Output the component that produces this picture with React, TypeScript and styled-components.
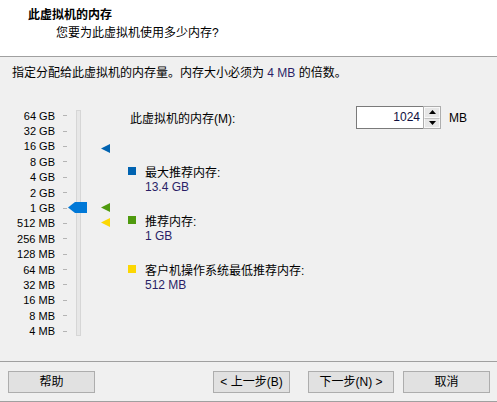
import React from "react";
import styled, { createGlobalStyle } from "styled-components";

const Global = createGlobalStyle`
  html, body { margin: 0; padding: 0; background: #f0f0f0; }
  body { font-family: "Liberation Sans", "Noto Sans CJK SC", sans-serif; font-size: 12px; color: #000; }
  * { box-sizing: border-box; }
`;

const Window = styled.div`
  width: 497px;
  height: 402px;
  display: flex;
  flex-direction: column;
  background: #f0f0f0;
  overflow: hidden;
`;

const Header = styled.div`
  height: 57px;
  background: #fff;
  border-bottom: 1px solid #a0a0a0;
  padding-top: 7px;
  display: flex;
  flex-direction: column;
`;

const Title = styled.div`
  font-weight: bold;
  line-height: 16px;
  padding-left: 28px;
`;

const Subtitle = styled.div`
  line-height: 16px;
  margin-top: 2px;
  padding-left: 56px;
`;

const Body = styled.div`
  height: 304px;
  display: flex;
  flex-direction: column;
  padding-top: 8px;
`;

const Instruction = styled.div`
  line-height: 16px;
  padding-left: 12px;
`;

const Num = styled.span`
  color: #2a1f66;
`;

const Main = styled.div`
  display: flex;
  margin-top: 24px;
`;

const SliderArea = styled.div`
  position: relative;
  width: 128px;
  height: 232px;
  flex-shrink: 0;
`;

const Scale = styled.div`
  padding-top: 3px;
  display: grid;
  grid-template-rows: repeat(15, 15.4px);
`;

const ScaleRow = styled.div`
  display: flex;
  align-items: center;
`;

const ScaleLabel = styled.span`
  width: 55px;
  text-align: right;
  font-size: 11px;
  white-space: nowrap;
`;

const Tick = styled.span`
  width: 4px;
  height: 1px;
  background: #b4b4b4;
  margin-left: 8px;
`;

const Track = styled.div`
  position: absolute;
  left: 76px;
  top: 5px;
  width: 5px;
  height: 226px;
  background: #e7e7e7;
  border: 1px solid #d6d6d6;
`;

const Thumb = styled.div`
  position: absolute;
  left: 68px;
  top: 97px;
  width: 19px;
  height: 11px;
  background: #0078d7;
  clip-path: polygon(0 50%, 7px 0, 100% 0, 100% 100%, 7px 100%);
`;

const Marker = styled.div<{ $color: string; $top: number }>`
  position: absolute;
  left: 101px;
  top: ${(p) => p.$top}px;
  width: 9px;
  height: 9px;
  background: ${(p) => p.$color};
  clip-path: polygon(0 50%, 100% 0, 100% 100%);
`;

const Panel = styled.div`
  display: flex;
  flex-direction: column;
  flex: 1;
`;

const MemRow = styled.div`
  display: flex;
  align-items: center;
  height: 23px;
  margin-top: 1px;
`;

const MemLabel = styled.span`
  width: 228px;
  padding-left: 2px;
`;

const Input = styled.div`
  width: 67px;
  height: 23px;
  background: #fff;
  border: 1px solid #7a7a7a;
  border-right: none;
  text-align: right;
  padding-right: 3px;
  line-height: 21px;
  color: #101040;
`;

const Spinner = styled.div`
  width: 18px;
  height: 23px;
  display: flex;
  flex-direction: column;
  border: 1px solid #adadad;
  background: #f0f0f0;
`;

const SpinBtn = styled.div`
  flex: 1;
  display: flex;
  align-items: center;
  justify-content: center;
  background: #e6e6e6;
  border: 1px solid #f8f8f8;
  & + & { border-top: 1px solid #c0c0c0; }
`;

const Unit = styled.span`
  margin-left: 8px;
`;

const Legend = styled.div`
  display: flex;
  flex-direction: column;
  gap: 17px;
  margin-top: 34px;
`;

const LegendItem = styled.div`
  display: grid;
  grid-template-columns: 17px auto;
  grid-auto-rows: 16px;
  align-items: center;
`;

const Swatch = styled.span<{ $color: string }>`
  width: 8px;
  height: 8px;
  background: ${(p) => p.$color};
`;

const Footer = styled.div`
  height: 41px;
  border-top: 1px solid #a0a0a0;
  border-bottom: 1px solid #a0a0a0;
  display: flex;
  padding: 9px 7px 0 8px;
  align-items: flex-start;
`;

const Button = styled.div<{ $w: number; $ml?: number }>`
  width: ${(p) => p.$w}px;
  margin-left: ${(p) => p.$ml ?? 0}px;
  height: 22px;
  background: #e1e1e1;
  border: 1px solid #adadad;
  display: flex;
  align-items: center;
  justify-content: center;
  line-height: 20px;
`;

const labels = [
  "64 GB", "32 GB", "16 GB", "8 GB", "4 GB", "2 GB", "1 GB", "512 MB",
  "256 MB", "128 MB", "64 MB", "32 MB", "16 MB", "8 MB", "4 MB",
];

const Arrow = ({ up }: { up?: boolean }) => (
  <svg width="7" height="4" viewBox="0 0 7 4">
    <polygon points={up ? "0,4 3.5,0 7,4" : "0,0 7,0 3.5,4"} fill="#000" />
  </svg>
);

export default function App() {
  return (
    <Window>
      <Global />
      <Header>
        <Title>此虚拟机的内存</Title>
        <Subtitle>您要为此虚拟机使用多少内存?</Subtitle>
      </Header>
      <Body>
        <Instruction>
          指定分配给此虚拟机的内存量。内存大小必须为 <Num>4 MB</Num> 的倍数。
        </Instruction>
        <Main>
          <SliderArea>
            <Scale>
              {labels.map((l) => (
                <ScaleRow key={l}>
                  <ScaleLabel>{l}</ScaleLabel>
                  <Tick />
                </ScaleRow>
              ))}
            </Scale>
            <Track />
            <Thumb />
            <Marker $color="#0063b1" $top={39} />
            <Marker $color="#4f9a0e" $top={98} />
            <Marker $color="#fcd703" $top={113} />
          </SliderArea>
          <Panel>
            <MemRow>
              <MemLabel>此虚拟机的内存(M):</MemLabel>
              <Input>1024</Input>
              <Spinner>
                <SpinBtn><Arrow up /></SpinBtn>
                <SpinBtn><Arrow /></SpinBtn>
              </Spinner>
              <Unit>MB</Unit>
            </MemRow>
            <Legend>
              <LegendItem>
                <Swatch $color="#0063b1" />
                <span>最大推荐内存:</span>
                <span />
                <Num>13.4 GB</Num>
              </LegendItem>
              <LegendItem>
                <Swatch $color="#4f9a0e" />
                <span>推荐内存:</span>
                <span />
                <Num>1 GB</Num>
              </LegendItem>
              <LegendItem>
                <Swatch $color="#fcd703" />
                <span>客户机操作系统最低推荐内存:</span>
                <span />
                <Num>512 MB</Num>
              </LegendItem>
            </Legend>
          </Panel>
        </Main>
      </Body>
      <Footer>
        <Button $w={87}>帮助</Button>
        <Button $w={77} $ml={118}>&lt; 上一步(B)</Button>
        <Button $w={86} $ml={18}>下一步(N) &gt;</Button>
        <Button $w={87} $ml={9}>取消</Button>
      </Footer>
    </Window>
  );
}
